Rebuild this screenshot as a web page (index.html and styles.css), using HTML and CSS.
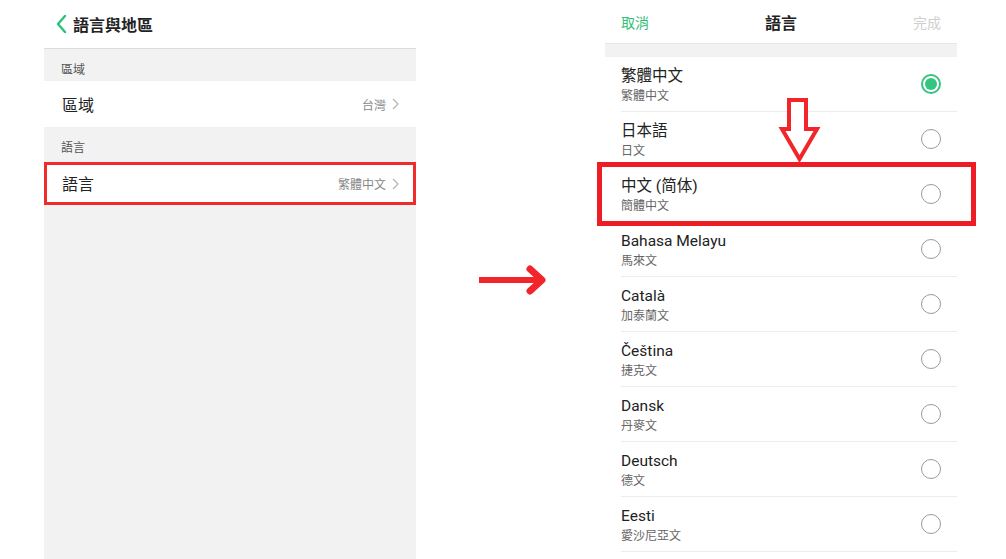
FILE: index.html
```html
<!DOCTYPE html>
<html lang="zh-Hant">
<head>
    <meta charset="UTF-8">
    <meta name="viewport" content="width=device-width, initial-scale=1.0">
    <title>語言與地區</title>
    <link rel="stylesheet" href="styles.css">
</head>
<body>
    <div class="page">
        <!-- 左: 語言與地區 -->
        <div class="left-panel">
            <div class="left-header">
                <svg class="back-icon" width="12" height="20" viewBox="0 0 12 20">
                    <polyline points="10,2 3,10 10,18" fill="none" stroke="#2fbf76" stroke-width="2.4" stroke-linecap="round" stroke-linejoin="round"/>
                </svg>
                <span class="left-title">語言與地區</span>
            </div>
            <div class="section-label first">區域</div>
            <div class="setting-row">
                <span class="setting-name">區域</span>
                <span class="setting-value">台灣
                    <svg class="chevron" width="7" height="12" viewBox="0 0 7 12"><polyline points="1,1 6,6 1,11" fill="none" stroke="#b5b5b5" stroke-width="1.2"/></svg>
                </span>
            </div>
            <div class="section-label">語言</div>
            <div class="setting-row marked">
                <span class="setting-name">語言</span>
                <span class="setting-value">繁體中文
                    <svg class="chevron" width="7" height="12" viewBox="0 0 7 12"><polyline points="1,1 6,6 1,11" fill="none" stroke="#b5b5b5" stroke-width="1.2"/></svg>
                </span>
            </div>
        </div>

        <div class="middle">
            <svg width="72" height="32" viewBox="0 0 72 32">
                <line x1="2" y1="16" x2="63" y2="16" stroke="#f2262a" stroke-width="6"/>
                <polyline points="53,5 65,16 53,27" fill="none" stroke="#f2262a" stroke-width="7" stroke-linecap="round" stroke-linejoin="round"/>
            </svg>
        </div>

        <!-- 右: 語言選單 -->
        <div class="right-panel">
            <div class="right-header">
                <span class="cancel">取消</span>
                <span class="right-title">語言</span>
                <span class="done">完成</span>
            </div>
            <div class="gap-band"></div>
            <div class="lang-list">
                <div class="lang-row">
                    <div class="lang-text"><div class="lang-name">繁體中文</div><div class="lang-sub">繁體中文</div></div>
                    <span class="radio checked"></span>
                </div>
                <div class="lang-row">
                    <div class="lang-text"><div class="lang-name">日本語</div><div class="lang-sub">日文</div></div>
                    <span class="radio"></span>
                </div>
                <div class="lang-row">
                    <div class="lang-text"><div class="lang-name">中文 (简体)</div><div class="lang-sub">簡體中文</div></div>
                    <span class="radio"></span>
                </div>
                <div class="lang-row">
                    <div class="lang-text"><div class="lang-name">Bahasa Melayu</div><div class="lang-sub">馬來文</div></div>
                    <span class="radio"></span>
                </div>
                <div class="lang-row">
                    <div class="lang-text"><div class="lang-name">Català</div><div class="lang-sub">加泰蘭文</div></div>
                    <span class="radio"></span>
                </div>
                <div class="lang-row">
                    <div class="lang-text"><div class="lang-name">Čeština</div><div class="lang-sub">捷克文</div></div>
                    <span class="radio"></span>
                </div>
                <div class="lang-row">
                    <div class="lang-text"><div class="lang-name">Dansk</div><div class="lang-sub">丹麥文</div></div>
                    <span class="radio"></span>
                </div>
                <div class="lang-row">
                    <div class="lang-text"><div class="lang-name">Deutsch</div><div class="lang-sub">德文</div></div>
                    <span class="radio"></span>
                </div>
                <div class="lang-row">
                    <div class="lang-text"><div class="lang-name">Eesti</div><div class="lang-sub">愛沙尼亞文</div></div>
                    <span class="radio"></span>
                </div>
            </div>

            <div class="mark-box"></div>
            <svg class="down-arrow" width="44" height="70" viewBox="0 0 44 70">
                <polygon points="11,4 28,4 28,33 39,33 21.5,63 4,33 11,33" fill="#fff" stroke="#f2262a" stroke-width="4" stroke-linejoin="miter"/>
            </svg>
        </div>
    </div>
</body>
</html>
```

FILE: styles.css
```css
body {
    margin: 0;
    padding: 0;
    background: #fff;
    overflow: hidden;
    font-family: Roboto, "Noto Sans CJK TC", sans-serif;
    color: #222;
}
.page {
    display: flex;
    width: 1006px;
    height: 559px;
}

/* left panel */
.left-panel {
    width: 372px;
    margin-left: 44px;
    height: 559px;
    background: #f2f2f2;
    display: flex;
    flex-direction: column;
}
.left-header {
    height: 48px;
    background: #fff;
    border-bottom: 1px solid #dcdcdc;
    display: flex;
    align-items: center;
    padding-left: 11px;
}
.back-icon {
    margin-right: 6px;
}
.left-title {
    font-size: 16px;
    font-weight: 700;
    color: #222;
}
.section-label {
    height: 35px;
    box-sizing: border-box;
    padding: 13px 0 0 17px;
    font-size: 12px;
    line-height: 16px;
    color: #555;
}
.section-label.first {
    height: 32px;
}
.setting-row {
    height: 46px;
    background: #fff;
    display: flex;
    align-items: center;
    justify-content: space-between;
    padding: 0 17px 0 18px;
}
.setting-row.marked {
    height: 43px;
    box-sizing: border-box;
    border: 3px solid #f02b2b;
    padding: 0 14px 0 15px;
}
.setting-name {
    font-size: 16px;
    margin-top: -1px;
}
.setting-value {
    font-size: 12px;
    color: #888;
    display: flex;
    align-items: center;
}
.chevron {
    margin-left: 6px;
}

/* arrow between screens */
.middle {
    width: 189px;
    display: flex;
    align-items: center;
    justify-content: center;
    padding-left: 4px;
    box-sizing: border-box;
}

/* right panel */
.right-panel {
    width: 352px;
    position: relative;
}
.right-header {
    height: 43px;
    display: flex;
    align-items: center;
    justify-content: space-between;
    padding: 0 16px;
}
.cancel {
    font-size: 14px;
    color: #2fbf76;
}
.right-title {
    font-size: 16px;
    font-weight: 700;
    color: #222;
}
.done {
    font-size: 14px;
    color: #cfcfcf;
}
.gap-band {
    height: 13px;
    background: #f2f2f2;
    border-top: 1px solid #e6e6e6;
}
.lang-row {
    height: 54px;
    margin-left: 16px;
    padding-right: 16px;
    border-bottom: 1px solid #ececec;
    display: flex;
    align-items: center;
    justify-content: space-between;
}
.lang-text {
    padding-top: 3px;
}
.lang-name {
    font-size: 15.5px;
    line-height: 20px;
    color: #222;
}
.lang-sub {
    font-size: 12px;
    line-height: 18px;
    color: #666;
    margin-top: 1px;
}
.radio {
    width: 20px;
    height: 20px;
    box-sizing: border-box;
    border: 1px solid #9a9a9a;
    border-radius: 50%;
    display: flex;
    align-items: center;
    justify-content: center;
}
.radio.checked {
    border: 2px solid #35c47f;
}
.radio.checked::after {
    content: "";
    width: 12px;
    height: 12px;
    border-radius: 50%;
    background: #35c47f;
}

/* annotations */
.mark-box {
    position: absolute;
    left: -8px;
    top: 162px;
    width: 379px;
    height: 64px;
    box-sizing: border-box;
    border: 5px solid #ee1c25;
}
.down-arrow {
    position: absolute;
    left: 173px;
    top: 96px;
}
```
